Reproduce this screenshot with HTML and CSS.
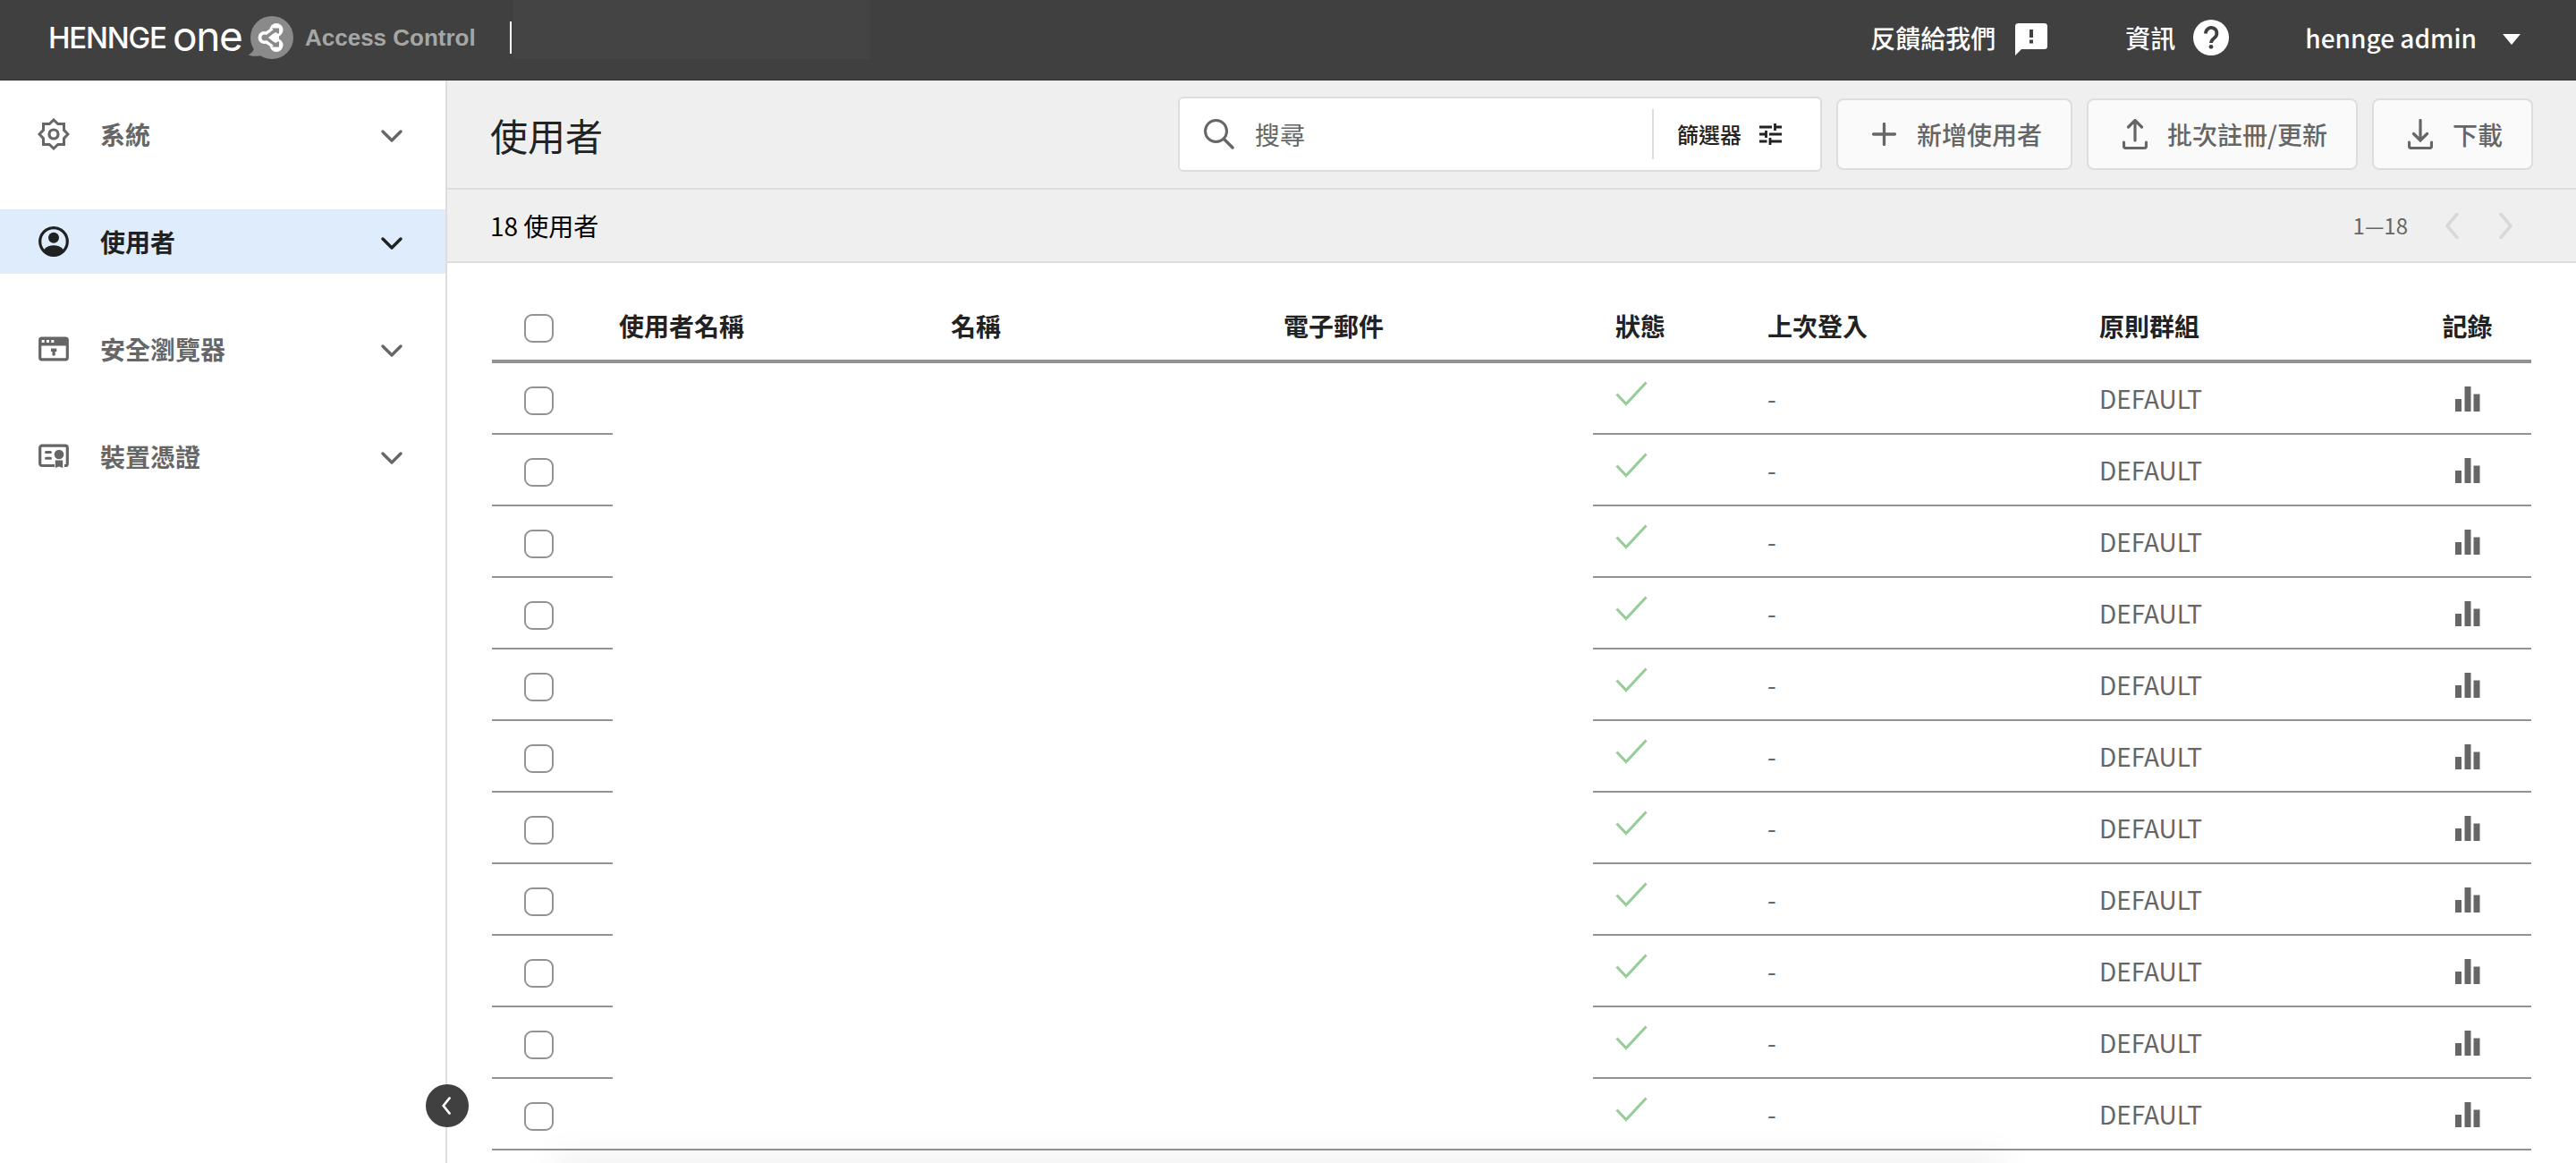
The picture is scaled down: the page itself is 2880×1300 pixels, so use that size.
FILE: index.html
```html
<!DOCTYPE html>
<html lang="zh-Hant">
<head>
    <meta charset="UTF-8">
    <meta name="viewport" content="width=device-width, initial-scale=1.0">
    <title>HENNGE One Access Control</title>
    <link rel="stylesheet" href="styles.css">
</head>
<body>
    <!-- Shared icons -->
    <svg class="sprite" width="0" height="0">
        <symbol id="chevron-down" viewBox="0 0 24 14">
            <path d="M2 2l10 10L22 2" fill="none" stroke="currentColor" stroke-width="3.400" stroke-linecap="round" stroke-linejoin="round"/>
        </symbol>
        <symbol id="check" viewBox="0 0 36 28">
            <path d="M1.500 14.500L12 25.500L34.500 1.500" fill="none" stroke="currentColor" stroke-width="3"/>
        </symbol>
        <symbol id="bars" viewBox="0 0 28 28">
            <path d="M0 14h7v14H0zM10.500 0h7v28h-7zM20.500 8.500h7V28h-7z" fill="currentColor"/>
        </symbol>
    </svg>

    <header class="header">
        <div class="brand">
            <span class="brand-name">HENNGE</span>
            <span class="brand-one">one</span>
            <svg class="brand-icon" width="52" height="50" viewBox="-3 -1 52 50">
                <path d="M4 36C3 41-1 42-2 43.500C3 45.500 9 45 14 43.500z" fill="#8a8a8a"/>
                <circle cx="24" cy="24" r="24" fill="#8a8a8a"/>
                <path d="M15 24L29 15M15 24L29 33" stroke="#fff" stroke-width="9" fill="none"/>
                <circle cx="15.500" cy="24" r="7" fill="#fff"/>
                <circle cx="29" cy="15.500" r="7.500" fill="#fff"/>
                <circle cx="29" cy="32.500" r="7.500" fill="#fff"/>
                <circle cx="16" cy="24" r="3.600" fill="#8a8a8a"/>
                <path d="M17 24L29 15M17 24L29 33" stroke="#8a8a8a" stroke-width="3.500" fill="none"/>
                <path d="M24 13.500h8v8zM24 34.500h8v-8z" fill="#8a8a8a"/>
                <path d="M20.500 24l5-4.500h6.500v9h-6.500z" fill="#fff"/>
            </svg>
            <span class="brand-product">Access Control</span>
        </div>
        <div class="tenant"></div>
        <nav class="header-nav">
            <a class="header-link feedback">反饋給我們
                <svg width="36" height="36" viewBox="0 0 36 36"><path d="M3.500 0h29A3.500 3.500 0 0 1 36 3.500v22a3.500 3.500 0 0 1-3.500 3.500H7l-7 7V3.500A3.500 3.500 0 0 1 3.500 0z" fill="#fff"/><path d="M16 7h4v9h-4zM16 18.500h4v4h-4z" fill="#404040"/></svg>
            </a>
            <a class="header-link info">資訊
                <svg width="40" height="40" viewBox="0 0 40 40"><circle cx="20" cy="20" r="20" fill="#fff"/><path d="M14 15.500a6.200 6.200 0 1 1 10 4.600c-2.500 2-4 3-4 6" fill="none" stroke="#404040" stroke-width="3.800"/><circle cx="20" cy="30.300" r="2.400" fill="#404040"/></svg>
            </a>
            <a class="header-link account">hennge admin
                <svg width="20" height="12" viewBox="0 0 20 12"><path d="M0 0h20L10 12z" fill="#fff"/></svg>
            </a>
        </nav>
    </header>

    <div class="layout">
        <aside class="sidebar">
            <a class="menu-item">
                <svg class="menu-icon" width="36" height="36" viewBox="0 0 36 36"><path d="M18 2l4.700 4.500H29.500v6.800L34 18l-4.500 4.700v6.800h-6.800L18 34l-4.700-4.500H6.500v-6.800L2 18l4.500-4.700V6.500h6.800z" fill="none" stroke="currentColor" stroke-width="3"/><circle cx="18" cy="18" r="5" fill="none" stroke="currentColor" stroke-width="3.200"/></svg>
                <span>系統</span>
                <svg class="menu-arrow"><use href="#chevron-down"/></svg>
            </a>
            <a class="menu-item active">
                <svg class="menu-icon" width="36" height="36" viewBox="0 0 36 36"><circle cx="18" cy="18" r="15.300" fill="none" stroke="currentColor" stroke-width="3.200"/><circle cx="18" cy="13.800" r="6" fill="currentColor"/><path d="M7 27c3-3.600 7-4.700 11-4.700s8 1.100 11 4.700c-3 4.500-7 6.500-11 6.500S10 31.500 7 27z" fill="currentColor"/></svg>
                <span>使用者</span>
                <svg class="menu-arrow"><use href="#chevron-down"/></svg>
            </a>
            <a class="menu-item">
                <svg class="menu-icon" width="36" height="36" viewBox="0 0 36 36"><rect x="2.700" y="6.200" width="30.600" height="23.600" rx="2" fill="none" stroke="currentColor" stroke-width="3.200"/><path d="M2 6h32v8.500H2z" fill="currentColor"/><path d="M4.700 8h3v3h-3zM10 8h3v3h-3zM15.300 8h3v3h-3z" fill="#fff"/><path d="M15 17.500h6.300V21h-1.600v4.500h-3.200V21H15z" fill="currentColor"/></svg>
                <span>安全瀏覽器</span>
                <svg class="menu-arrow"><use href="#chevron-down"/></svg>
            </a>
            <a class="menu-item">
                <svg class="menu-icon" width="36" height="36" viewBox="0 0 36 36"><path d="M19 28.500H5a2.300 2.300 0 0 1-2.300-2.300V8.500A2.300 2.300 0 0 1 5 6.200h26a2.300 2.300 0 0 1 2.300 2.300v17.700a2.300 2.300 0 0 1-2.300 2.300h-1" fill="none" stroke="currentColor" stroke-width="3.200"/><path d="M9.500 13.500h5M9.500 20.200h5" stroke="currentColor" stroke-width="3" stroke-linecap="round"/><circle cx="24" cy="16" r="5.300" fill="currentColor"/><path d="M19.800 22.500h8.400V31L24 29.500 19.800 31z" fill="currentColor"/></svg>
                <span>裝置憑證</span>
                <svg class="menu-arrow"><use href="#chevron-down"/></svg>
            </a>
            <button class="collapse">
                <svg width="10" height="20" viewBox="0 0 10 20"><path d="M8.500 1.500L1.700 10l6.800 8.500" fill="none" stroke="#fff" stroke-width="2.800" stroke-linecap="round" stroke-linejoin="round"/></svg>
            </button>
        </aside>

        <main class="content">
            <div class="toolbar">
                <h1 class="page-title">使用者</h1>
                <div class="search">
                    <svg width="34" height="34" viewBox="0 0 34 34"><circle cx="13.500" cy="13.500" r="12" fill="none" stroke="#666" stroke-width="3"/><path d="M22.500 22.500l9.500 9.500" stroke="#666" stroke-width="3.400" stroke-linecap="round"/></svg>
                    <span class="search-text">搜尋</span>
                    <div class="filter">篩選器
                        <svg width="25" height="24" viewBox="0 0 25 24"><path d="M0 4h14M17.500 4H25M17.500 0v8M0 12h7.500M11 12h14M7.500 8v8M0 20h8.500M12 20h13M12 16v8" fill="none" stroke="#222" stroke-width="2.800"/></svg>
                    </div>
                </div>
                <button class="btn btn-add">
                    <svg width="27" height="26" viewBox="0 0 27 26"><path d="M1.500 13h24M13.500 1.500v23" stroke="currentColor" stroke-width="3.300" stroke-linecap="round"/></svg>
                    新增使用者
                </button>
                <button class="btn btn-batch">
                    <svg width="28" height="34" viewBox="0 0 28 34"><path d="M14 24V2M6.500 9L14 1.500 21.500 9M1.500 26v4.500q0 2 2 2h21q2 0 2-2V26" fill="none" stroke="currentColor" stroke-width="3.200" stroke-linecap="round"/></svg>
                    批次註冊/更新
                </button>
                <button class="btn btn-download">
                    <svg width="28" height="34" viewBox="0 0 28 34"><path d="M14 1.500V23M6.500 16.500L14 24l7.500-7.500M1.500 26v4.500q0 2 2 2h21q2 0 2-2V26" fill="none" stroke="currentColor" stroke-width="3.200" stroke-linecap="round"/></svg>
                    下載
                </button>
            </div>

            <div class="summary">
                <span>18 使用者</span>
                <div class="pager">
                    <span>1—18</span>
                    <svg width="15" height="29" viewBox="0 0 15 29"><path d="M13 1.500L2 14.500l11 13" fill="none" stroke="currentColor" stroke-width="3.600" stroke-linecap="round"/></svg>
                    <svg width="15" height="29" viewBox="0 0 15 29"><path d="M2 1.500l11 13-11 13" fill="none" stroke="currentColor" stroke-width="3.600" stroke-linecap="round"/></svg>
                </div>
            </div>

            <table class="users">
                <colgroup>
                    <col class="col-check"><col class="col-user"><col class="col-name"><col class="col-mail">
                    <col class="col-status"><col class="col-login"><col class="col-group"><col class="col-log">
                </colgroup>
                <thead>
                    <tr>
                        <th class="pick"><span class="checkbox"></span></th>
                        <th class="private">使用者名稱</th>
                        <th class="private">名稱</th>
                        <th class="private">電子郵件</th>
                        <th>狀態</th>
                        <th>上次登入</th>
                        <th>原則群組</th>
                        <th class="log">記錄</th>
                    </tr>
                </thead>
                <tbody id="userRows"></tbody>
            </table>
            <div class="bottom-shade"></div>
        </main>
    </div>

    <script>
        const rowCount = 11;
        const row = `
            <tr>
                <td class="pick"><span class="checkbox"></span></td>
                <td class="private"></td>
                <td class="private"></td>
                <td class="private"></td>
                <td class="status"><svg width="36" height="28"><use href="#check"/></svg></td>
                <td>-</td>
                <td>DEFAULT</td>
                <td class="log"><svg width="28" height="28"><use href="#bars"/></svg></td>
            </tr>`;
        document.getElementById('userRows').innerHTML = row.repeat(rowCount);
    </script>
</body>
</html>
```

FILE: styles.css
```css
* {
    box-sizing: border-box;
}
body {
    margin: 0;
    height: 1300px;
    overflow: hidden;
    background: #fff;
    color: #222;
    font-family: "Noto Sans CJK TC", sans-serif;
    font-size: 28px;
    line-height: 40px;
}
svg {
    display: block;
    flex: none;
}
.sprite {
    position: absolute;
}

/* Header */
.header {
    display: flex;
    align-items: flex-start;
    height: 90px;
    background: #404040;
    border-bottom: 1px solid #383438;
    color: #fff;
}
.brand {
    display: flex;
    align-items: center;
    width: 572px;
    height: 36px;
    margin-top: 24px;
    padding-left: 54px;
    border-right: 2px solid #fff;
    white-space: nowrap;
}
.brand-name {
    width: 139px;
    font-family: Inter, sans-serif;
    font-size: 33px;
    font-weight: 500;
    letter-spacing: -1.2px;
}
.brand-one {
    width: 84px;
    font-family: Inter, sans-serif;
    font-size: 46px;
    letter-spacing: -1.4px;
    padding-bottom: 5px;
}
.brand-icon {
    width: 52px;
}
.brand-product {
    margin-left: 12px;
    font-family: "Liberation Sans", Arial, sans-serif;
    font-size: 26px;
    font-weight: bold;
    color: #a6a6a6;
}
.tenant {
    width: 399px;
    height: 66px;
    margin-left: 2px;
    background: #444;
}
.header-nav {
    display: flex;
    margin-left: auto;
    padding: 22px 62px 0 0;
}
.header-link {
    display: flex;
    align-items: center;
    height: 40px;
    font-weight: 500;
}
.feedback svg {
    margin: 4px 0 0 22px;
}
.info {
    margin-left: 87px;
}
.info svg {
    margin-left: 20px;
}
.account {
    margin-left: 85px;
}
.account svg {
    margin: 4px 0 0 29px;
}

/* Sidebar */
.layout {
    display: flex;
    height: 1210px;
}
.sidebar {
    position: relative;
    display: flex;
    flex-direction: column;
    gap: 48px;
    flex: none;
    width: 500px;
    padding-top: 24px;
    border-right: 2px solid #ddd;
}
.menu-item {
    display: flex;
    align-items: center;
    height: 72px;
    padding: 0 48px 0 42px;
    color: #666;
    font-weight: bold;
}
.menu-item.active {
    background: #dfecfc;
    color: #1f2122;
}
.menu-icon {
    margin-right: 34px;
}
.menu-arrow {
    width: 24px;
    height: 14px;
    margin: 3px 0 0 auto;
}
.collapse {
    position: absolute;
    right: -26px;
    bottom: 40px;
    display: flex;
    align-items: center;
    justify-content: center;
    width: 48px;
    height: 48px;
    padding: 0 2px 0 0;
    border: 0;
    border-radius: 50%;
    background: #404040;
}

/* Content */
.content {
    position: relative;
    flex: 1;
}
.toolbar {
    display: flex;
    align-items: center;
    height: 122px;
    padding: 0 48px;
    background: #efefef;
    border-bottom: 2px solid #ddd;
}
.page-title {
    margin: 2px auto 0 0;
    font-size: 42px;
    font-weight: normal;
    line-height: 60px;
}
.search {
    display: flex;
    align-items: center;
    width: 720px;
    height: 84px;
    margin-right: 16px;
    padding-left: 27px;
    background: #fff;
    border: 2px solid #ddd;
    border-radius: 6px;
}
.search-text {
    margin-left: 23px;
    color: #666;
}
.filter {
    display: flex;
    align-items: center;
    gap: 20px;
    width: 188px;
    height: 56px;
    margin-left: auto;
    padding-left: 26px;
    border-left: 2px solid #ddd;
    font-size: 24px;
    font-weight: 500;
}
.btn {
    display: flex;
    align-items: center;
    gap: 22px;
    height: 80px;
    margin: 0;
    padding: 0 0 0 38px;
    background: #fafafa;
    border: 2px solid #ddd;
    border-radius: 8px;
    color: #666;
    font: inherit;
    font-weight: 500;
    white-space: nowrap;
}
.btn-add {
    width: 264px;
    margin-right: 16px;
    gap: 23px;
}
.btn-batch {
    width: 303px;
    margin-right: 16px;
}
.btn-download {
    width: 180px;
}
.summary {
    display: flex;
    align-items: center;
    justify-content: space-between;
    height: 82px;
    padding: 0 71px 0 48px;
    background: #efefef;
    border-bottom: 2px solid #ddd;
    color: #000;
}
.pager {
    display: flex;
    align-items: center;
    color: #d8d8d8;
}
.pager span {
    margin-right: 42px;
    font-size: 24px;
    color: #666;
}
.pager svg + svg {
    margin-left: 45px;
}

/* Users table */
.users {
    width: 2280px;
    margin: 30px 0 0 50px;
    table-layout: fixed;
    border-collapse: separate;
    border-spacing: 0;
}
.col-check { width: 135px; }
.col-user { width: 371px; }
.col-name { width: 372px; }
.col-mail { width: 353px; }
.col-status { width: 170px; }
.col-login { width: 371px; }
.col-group { width: 365px; }
.col-log { width: 143px; }
.users th,
.users td {
    height: 80px;
    padding: 0 0 0 25px;
    border-bottom: 2px solid #929292;
    text-align: left;
    vertical-align: middle;
}
.users th {
    height: 82px;
    padding-top: 2px;
    border-bottom-width: 4px;
}
.users td {
    color: #666;
}
.users .private {
    padding-left: 7px;
}
.users tr:not(:last-child) td.private {
    border-bottom-color: transparent;
}
.users .pick {
    padding: 5px 0 0 36px;
}
.users th.pick {
    padding-top: 7px;
}
.checkbox {
    display: block;
    width: 33px;
    height: 32px;
    border: 2px solid #929292;
    border-radius: 9px;
}
.users .status {
    padding-bottom: 10px;
    color: #97cc97;
}
.users .log {
    padding-left: 0;
    text-align: center;
}
.log svg {
    margin: 2px auto 0;
}
.bottom-shade {
    position: absolute;
    left: 120px;
    bottom: -12px;
    width: 1620px;
    height: 10px;
    box-shadow: 0 0 40px rgba(0, 0, 0, 0.2);
    pointer-events: none;
}
```
